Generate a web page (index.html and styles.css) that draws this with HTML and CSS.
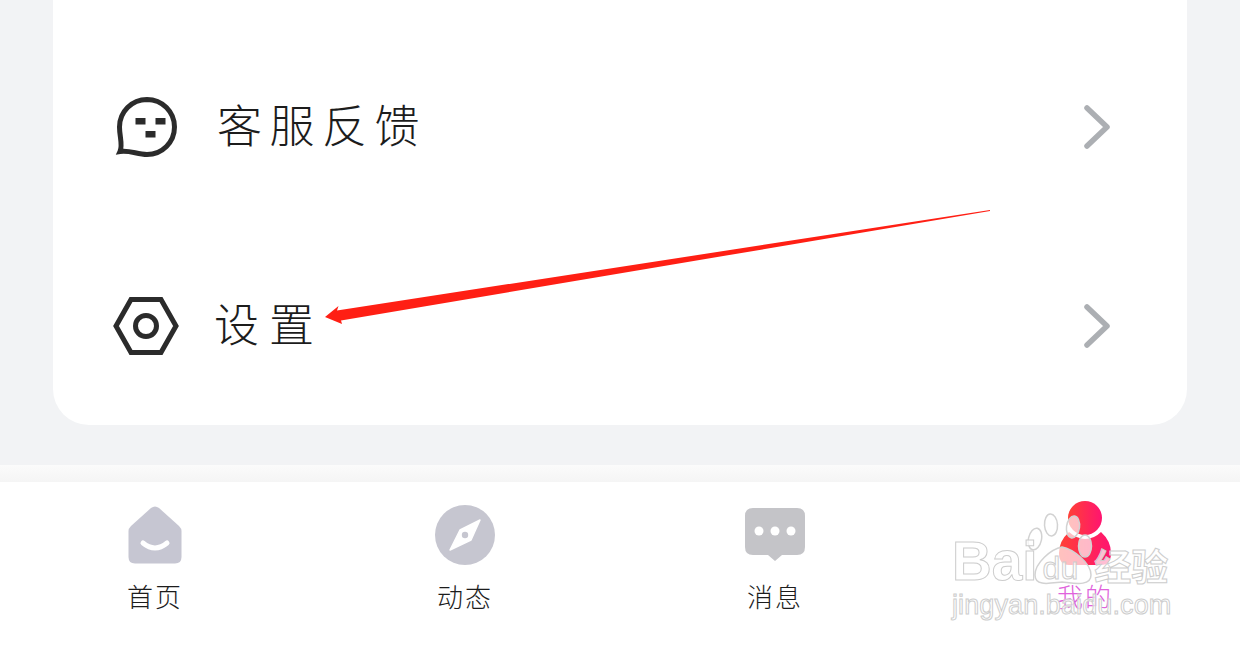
FILE: index.html
```html
<!DOCTYPE html>
<html lang="zh-CN">
<head>
<meta charset="utf-8">
<title>设置</title>
<link rel="stylesheet" href="styles.css">
</head>
<body>
<div class="page">
  <main class="content">
    <section class="card">
      <div class="row">
        <svg class="row-icon" viewBox="0 0 66 60"><path class="line" d="M34 2.500a27.500 27.500 0 0 1 0 55C24 57.500 17 53 7 54.500C10 48 6.500 40 6.500 30A27.500 27.500 0 0 1 34 2.500Z"/><rect class="solid" x="22.500" y="21" width="10" height="6.500"/><rect class="solid" x="42.500" y="21" width="10" height="6.500"/><rect class="solid" x="32.500" y="34" width="10" height="6.500"/></svg>
        <span class="row-label feedback">客服反馈</span>
        <svg class="chevron" viewBox="0 0 28 44"><path d="M4 3L24 22L4 41"/></svg>
      </div>
      <div class="row">
        <svg class="row-icon" viewBox="0 0 66 60"><path class="line" d="M3 30L18 3.500H48L63 30L48 56.500H18Z"/><circle class="line" cx="33" cy="30" r="10.500"/></svg>
        <span class="row-label settings">设置</span>
        <svg class="chevron" viewBox="0 0 28 44"><path d="M4 3L24 22L4 41"/></svg>
      </div>
    </section>
  </main>
  <div class="band"></div>
  <nav class="tabs">
    <div class="tab">
      <svg class="tab-icon" viewBox="0 0 64 60"><path class="home" d="M32 1.500Q34 1.500 36 3L56 21Q58.500 23.500 58.500 26V52Q58.500 58.500 52 58.500H12Q5.500 58.500 5.500 52V26Q5.500 23.500 8 21L28 3Q30 1.500 32 1.500Z"/><path class="smile" d="M20 38Q32 48 44 38"/></svg>
      <span class="tab-label">首页</span>
    </div>
    <div class="tab">
      <svg class="tab-icon" viewBox="0 0 64 60"><circle class="compass" cx="32" cy="30" r="30"/><path class="needle" d="M47 15L38 35L17 45L27 25Z"/><circle class="compass" cx="32" cy="30" r="3.200"/></svg>
      <span class="tab-label">动态</span>
    </div>
    <div class="tab">
      <svg class="tab-icon" viewBox="0 0 64 60"><path class="bubble" d="M10 3H54Q62 3 62 11V42Q62 50 54 50H39L32 56L25 50H10Q2 50 2 42V11Q2 3 10 3Z"/><circle class="dot" cx="16" cy="26" r="4.500"/><circle class="dot" cx="32" cy="26" r="4.500"/><circle class="dot" cx="48" cy="26" r="4.500"/></svg>
      <span class="tab-label">消息</span>
    </div>
    <div class="tab">
      <svg class="tab-icon" viewBox="0 0 64 60">
        <defs><linearGradient id="me" x1="0" y1="0" x2="1" y2="0"><stop offset="0" stop-color="#ff4136"/><stop offset="1" stop-color="#ff1470"/></linearGradient></defs>
        <circle cx="32" cy="13" r="17" fill="url(#me)"/>
        <path d="M16 27Q24 34 32 34Q41 34 48 27Q58 36 58 48Q58 60 48 60H16Q6 60 6 48Q6 36 16 27Z" fill="url(#me)"/>
      </svg>
      <span class="tab-label active">我的</span>
    </div>
  </nav>

  <svg class="arrow" viewBox="0 0 1240 646"><path d="M325 317L338.500 306L337 310.500L990 210L990 211L341 320.500L342 324Z"/></svg>

  <div class="watermark">
    <svg class="paw" viewBox="0 0 66 72">
      <ellipse cx="8" cy="26" rx="6.500" ry="11" transform="rotate(12 8 26)"/>
      <ellipse cx="24" cy="12" rx="6.500" ry="11" transform="rotate(-4 24 12)"/>
      <ellipse cx="46" cy="14" rx="6.500" ry="11" transform="rotate(8 46 14)"/>
      <ellipse cx="58" cy="33" rx="6.500" ry="11"/>
      <path d="M35 34C46 36 64 50 64 62C64 74 46 70 35 69C24 70 8 74 8 62C8 50 24 36 35 34Z"/>
    </svg>
    <div class="wm-top"><span class="wm-bai">Bai</span><span class="wm-du">du</span><span class="wm-jy">经验</span></div>
    <div class="wm-url">jingyan.baidu.com</div>
  </div>
</div>
</body>
</html>
```
FILE: styles.css
```css
* { box-sizing: border-box; }
html, body { margin: 0; padding: 0; }
body { background: #fff; font-family: "Noto Sans CJK SC", "Noto Sans", sans-serif; }

.page {
  position: relative;
  width: 1240px;
  height: 646px;
  overflow: hidden;
  display: flex;
  flex-direction: column;
  background: #fff;
}
.content {
  height: 465px;
  padding: 0 53px;
  background: #f2f3f5;
}
.card {
  height: 425px;
  padding-top: 27px;
  background: #fff;
  border-radius: 0 0 36px 36px;
}
.row {
  height: 199px;
  padding: 0 76px 0 60px;
  display: flex;
  align-items: center;
}
.row-icon { width: 66px; height: 60px; flex: none; }
.row-label { flex: 1; color: #1c1c1c; font-weight: 300; font-size: 45px; line-height: 54px; }
.feedback { margin-left: 38px; margin-top: -6px; letter-spacing: 7.500px; }
.settings { margin-left: 35px; margin-top: -6px; letter-spacing: 10px; }
.line { fill: none; stroke: #2b2b2b; stroke-width: 5; }
.solid { fill: #2b2b2b; }
.chevron { width: 28px; height: 44px; flex: none; }
.chevron path { fill: none; stroke: #acafb3; stroke-width: 5.500; stroke-linecap: round; stroke-linejoin: round; }

.band {
  height: 17px;
  background: linear-gradient(#fbfbfb, #f5f5f5);
}
.tabs {
  flex: 1;
  display: grid;
  grid-template-columns: repeat(4, 310px);
  background: #fff;
}
.tab {
  padding-top: 23px;
  display: flex;
  flex-direction: column;
  align-items: center;
}
.tab-icon { width: 64px; height: 60px; overflow: visible; }
.tab-label {
  margin-top: 13px;
  color: #1c1c1c;
  font-weight: 300;
  font-size: 26px;
  line-height: 36px;
  letter-spacing: 2px;
}
.tab-label.active { color: #e062dc; }
.home { fill: #c6c6d2; }
.smile { fill: none; stroke: #fff; stroke-width: 5; stroke-linecap: round; }
.compass { fill: #c6c6d0; }
.needle { fill: #fff; stroke: #fff; stroke-width: 1.500; stroke-linejoin: round; }
.bubble { fill: #c4c4c8; }
.dot { fill: #fff; }

.arrow {
  position: absolute;
  left: 0;
  top: 0;
  width: 1240px;
  height: 646px;
}
.arrow path { fill: #ff1f14; }

.watermark {
  position: absolute;
  left: 952px;
  top: 518px;
  width: 224px;
  height: 100px;
  color: rgba(255, 255, 255, 0.72);
  font-family: "Liberation Sans", sans-serif;
  -webkit-text-stroke: 1px #cdcdcd;
}
.paw {
  position: absolute;
  left: 75px;
  top: -5px;
  width: 66px;
  height: 72px;
  fill: rgba(255, 255, 255, 0.68);
  stroke: #d2d2d2;
  stroke-width: 1.500;
}
.wm-top {
  position: relative;
  height: 68px;
  display: flex;
  align-items: flex-end;
  white-space: nowrap;
}
.wm-bai { font-size: 55px; font-weight: 700; line-height: 50px; }
.wm-du { font-size: 32px; line-height: 36px; margin-left: 5px; }
.wm-jy {
  margin-left: 16px;
  font-family: "Noto Sans CJK SC", sans-serif;
  font-size: 37px;
  font-weight: 700;
  line-height: 42px;
}
.wm-url {
  position: relative;
  margin-top: 4px;
  font-size: 27px;
  line-height: 30px;
  letter-spacing: 0.1px;
  white-space: nowrap;
}
```
